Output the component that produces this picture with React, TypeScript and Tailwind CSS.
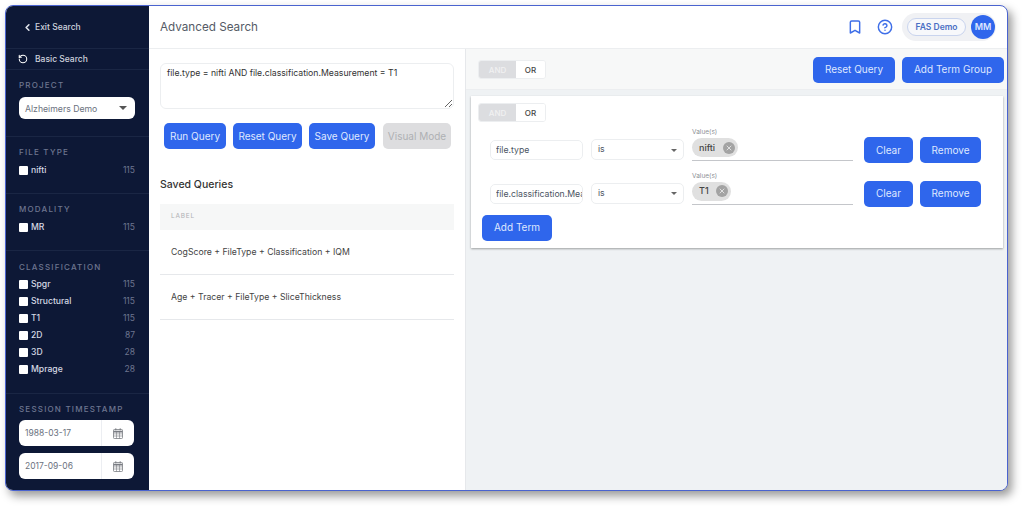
import { Bookmark, ChevronLeft, CircleHelp, RotateCcw, X } from "lucide-react"

const font = { fontFamily: "Inter, 'Noto Sans', sans-serif" }

function Facet({ title, items, box, list }: { title: string; items: [string, number][]; box: string; list: string }) {
  return (
    <div className={`border-b border-[#1a2644] pl-[13px] pr-[14px] ${box}`}>
      <div className="text-[8px] leading-[12px] tracking-[1.2px] text-[#6d7690] font-medium">{title}</div>
      <div className={list}>
        {items.map(([label, n]) => (
          <div key={label} className="flex items-center h-[17px]">
            <span className="w-[9px] h-[9px] bg-white rounded-[1px] mr-[3px]"></span>
            <span className="text-[8.6px] font-medium text-[#d5d9e4] flex-1">{label}</span>
            <span className="text-[8.5px] text-[#6d7690]">{n}</span>
          </div>
        ))}
      </div>
    </div>
  )
}

function CalendarIcon() {
  return (
    <svg width="10" height="11" viewBox="0 0 10 11" fill="none" stroke="#7a7d83" strokeWidth="0.8">
      <rect x="0.5" y="1.5" width="9" height="9" rx="0.8" />
      <path d="M0.5 3.6h9" strokeWidth="1.8" />
      <path d="M0.5 5.9h9M0.5 8h9M3.5 3.6v6.9M6.5 3.6v6.9" strokeWidth="0.6" />
      <path d="M2.8 0.3v2M7.2 0.3v2" strokeWidth="1" />
    </svg>
  )
}

function DateBox({ value }: { value: string }) {
  return (
    <div className="flex items-center bg-white rounded-[6px] w-[115px] h-[26px]">
      <span className="flex-1 pl-[6px] text-[8.5px] text-[#6b7280]">{value}</span>
      <span className="w-[33px] h-full border-l border-[#eceef2] flex items-center justify-center pr-[1px]">
        <CalendarIcon />
      </span>
    </div>
  )
}

function Btn({ children, w }: { children: string; w: string }) {
  return (
    <button className={`bg-[#2f66ec] text-[#dfe8ff] rounded-[5px] text-[10px] h-[26px] ${w}`}>{children}</button>
  )
}

function AndOr() {
  return (
    <div className="flex w-[68px] h-[19px] rounded-[3px] border border-[#eceef0] text-[8px] font-medium overflow-hidden">
      <span className="w-[37px] bg-[#dcdde0] text-[#f1f1f2] flex items-center justify-center">AND</span>
      <span className="flex-1 bg-white text-[#444] flex items-center justify-center">OR</span>
    </div>
  )
}

function Term({ field, chip, chipW }: { field: string; chip: string; chipW: string }) {
  return (
    <div className="flex items-end h-[36px] mb-[7.5px]">
      <input
        readOnly
        value={field}
        className="w-[93px] h-[20px] mb-[6px] mr-[8px] border border-[#eceef0] rounded-[5px] pl-[5px] text-[8.7px] text-[#4b5563] outline-none"
      />
      <div className="w-[93px] h-[21px] mb-[6px] mr-[8px] border border-[#eceef0] rounded-[5px] pl-[6px] pr-[6px] pt-[1px] flex items-center justify-between text-[8.7px] text-[#4b5563]">
        is
        <span className="w-0 h-0 border-x-[3.5px] border-x-transparent border-t-[3.5px] border-t-[#666]"></span>
      </div>
      <div className="w-[161px] h-[33px] border-b border-[#c4c6ca] mr-[11px] mb-[5px]">
        <div className="text-[6.5px] leading-[9px] text-[#8c8f95]">Value(s)</div>
        <div className={`mt-[1px] h-[19px] rounded-full bg-[#e0e0e0] flex items-center justify-between pl-[7px] pr-[3px] text-[9px] font-medium text-[#444] ${chipW}`}>
          {chip}
          <span className="w-[12px] h-[12px] rounded-full bg-[#a3a3a3] flex items-center justify-center">
            <X size={8} strokeWidth={3} className="text-[#e0e0e0]" />
          </span>
        </div>
      </div>
      <div className="flex gap-[7px] mb-[3px] self-end">
        <Btn w="w-[49px]">Clear</Btn>
        <Btn w="w-[61px]">Remove</Btn>
      </div>
    </div>
  )
}

export default function App() {
  return (
    <div style={font} className="w-[1024px] h-[507px] bg-white pl-[5px] pt-[5px] overflow-hidden">
      <div className="w-[1003px] h-[486px] flex rounded-[8px] border border-[#4a63cf] overflow-hidden bg-white shadow-[4px_5px_10px_rgba(0,0,0,0.4)]">
        <div className="w-[143px] h-full shrink-0 bg-[#0d1836] flex flex-col">
          <div className="h-[43px] flex items-center pl-[16px] border-b border-[#1a2644] text-[8.5px] font-medium text-[#cfd3de]">
            <ChevronLeft size={11} strokeWidth={3.5} className="mr-[2px] text-[#dfe2ea]" />
            Exit Search
          </div>
          <div className="h-[21px] flex items-center pl-[12px] border-b border-[#1a2644] text-[8.5px] font-medium text-[#cfd3de]">
            <RotateCcw size={10} strokeWidth={2.5} className="mr-[7px] text-white" />
            Basic Search
          </div>
          <div className="h-[67px] pl-[13px] pr-[14px] pt-[9px] border-b border-[#1a2644]">
            <div className="text-[8px] leading-[12px] tracking-[1.2px] text-[#6d7690] font-medium">PROJECT</div>
            <div className="mt-[6px] h-[22px] w-[116px] bg-white rounded-[6px] flex items-center justify-between pl-[6px] pr-[8px] text-[8.7px] text-[#6b7280]">
              <span className="pt-[3px]">Alzheimers Demo</span>
              <span className="w-0 h-0 border-x-[4px] border-x-transparent border-t-[4px] border-t-[#555]"></span>
            </div>
          </div>
          <Facet title="FILE TYPE" box="h-[57px] pt-[9px]" list="mt-[4px]" items={[["nifti", 115]]} />
          <Facet title="MODALITY" box="h-[57px] pt-[9px]" list="mt-[4px]" items={[["MR", 115]]} />
          <Facet
            title="CLASSIFICATION"
            box="h-[143px] pt-[10px]"
            list="mt-[3px]"
            items={[["Spgr", 115], ["Structural", 115], ["T1", 115], ["2D", 87], ["3D", 28], ["Mprage", 28]]}
          />
          <div className="pl-[13px] pt-[9px]">
            <div className="text-[8px] leading-[12px] tracking-[1.2px] text-[#6d7690] font-medium">SESSION TIMESTAMP</div>
            <div className="mt-[5px] flex flex-col gap-[7px]">
              <DateBox value="1988-03-17" />
              <DateBox value="2017-09-06" />
            </div>
          </div>
        </div>

        <div className="flex-1 min-w-0 flex flex-col">
          <div className="h-[43px] shrink-0 border-b border-[#eceef0] flex items-center pl-[11px] pr-[11px]">
            <div className="text-[11.7px] pt-[1px] text-[#555b66] flex-1">Advanced Search</div>
            <Bookmark size={16} strokeWidth={2.2} className="text-[#3f6fe8] mr-[14px]" />
            <CircleHelp size={16} strokeWidth={2.2} className="text-[#3f6fe8] mr-[9px]" />
            <div className="h-[28px] w-[94px] rounded-full bg-[#f0f1f4] flex items-center justify-between pl-[5px] pr-[1px]">
              <span className="h-[18px] w-[59px] rounded-full border border-[#c9d4ee] bg-[#f7f8fb] text-[8.5px] font-semibold text-[#4a6fc4] flex items-center justify-center">FAS Demo</span>
              <span className="w-[24px] h-[24px] rounded-full bg-[#2f66ec] text-[9px] font-semibold text-[#dfe8ff] flex items-center justify-center">MM</span>
            </div>
          </div>

          <div className="flex-1 flex min-h-0">
            <div className="w-[317px] shrink-0 border-r border-[#e6e8eb] pl-[11px] pr-[11px] pt-[14px]">
              <textarea
                readOnly
                value="file.type = nifti AND file.classification.Measurement = T1"
                className="block h-[46px] w-[294px] border border-[#eceef0] rounded-[6px] pl-[6px] pt-[3px] text-[8.7px] text-[#333] outline-none"
              />
              <div className="flex mt-[14px] pl-[4px]">
                <Btn w="w-[62px]">Run Query</Btn>
                <div className="w-[7px]"></div>
                <Btn w="w-[69px]">Reset Query</Btn>
                <div className="w-[7px]"></div>
                <Btn w="w-[66px]">Save Query</Btn>
                <div className="w-[8px]"></div>
                <button className="w-[68px] h-[26px] rounded-[5px] bg-[#dddddf] text-[#aeb0b3] text-[10px]">Visual Mode</button>
              </div>
              <div className="mt-[29px] text-[10.5px] leading-[14px] font-medium text-[#333]">Saved Queries</div>
              <div className="mt-[12px] w-[294px]">
                <div className="h-[26px] bg-[#f6f7f7] pl-[11px] flex items-center text-[6.5px] tracking-[0.8px] text-[#aeb0b3]">LABEL</div>
                <div className="h-[45px] border-b border-[#e6e8eb] pl-[11px] pt-[2px] flex items-center text-[8.7px] text-[#444]">CogScore + FileType + Classification + IQM</div>
                <div className="h-[45px] border-b border-[#e6e8eb] pl-[11px] pt-[2px] flex items-center text-[8.7px] text-[#444]">Age + Tracer + FileType + SliceThickness</div>
              </div>
            </div>

            <div className="flex-1 min-w-0 bg-[#eff2f4]">
              <div className="h-[41px] bg-[#f7f8f8] border-b border-[#eceef0] pt-[1px] flex items-center pl-[12px] pr-[3px]">
                <AndOr />
                <div className="flex-1"></div>
                <Btn w="w-[82px]">Reset Query</Btn>
                <div className="w-[7px]"></div>
                <Btn w="w-[102px]">Add Term Group</Btn>
              </div>
              <div className="w-[532px] h-[152px] ml-[5px] mt-[6px] bg-white shadow-[0_1px_2px_rgba(0,0,0,0.35)] pl-[7px] pt-[7px]">
                <AndOr />
                <div className="mt-[8px] pl-[12px]">
                  <Term field="file.type" chip="nifti" chipW="w-[46px]" />
                  <Term field="file.classification.Measurement" chip="T1" chipW="w-[39px]" />
                </div>
                <div className="pl-[4px] -mt-[4px]">
                  <Btn w="w-[70px]">Add Term</Btn>
                </div>
              </div>
            </div>
          </div>
        </div>
      </div>
    </div>
  )
}
